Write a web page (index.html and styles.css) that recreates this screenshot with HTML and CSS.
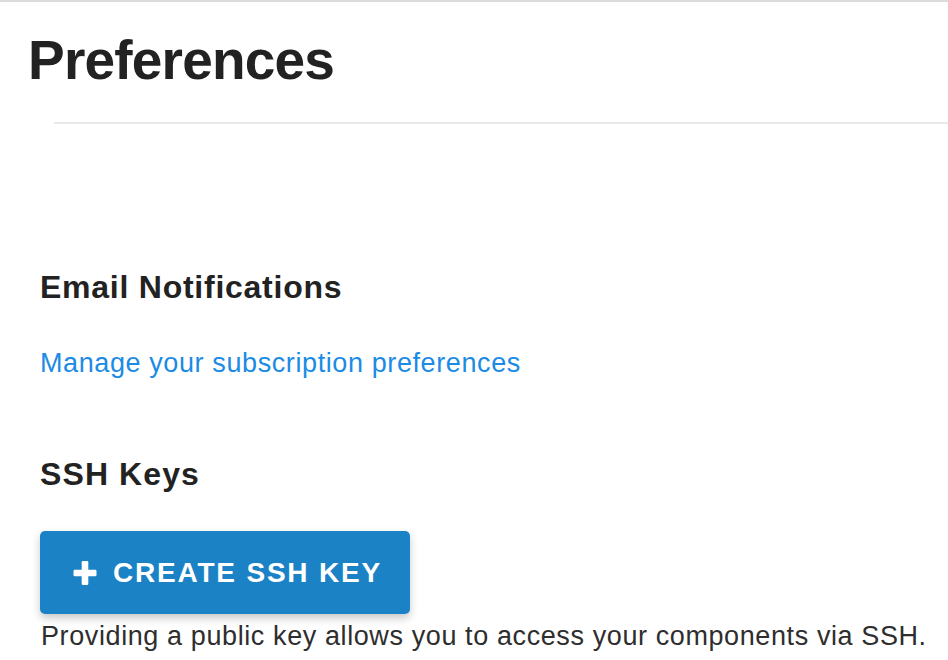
FILE: index.html
```html
<!DOCTYPE html>
<html>
<head>
<meta charset="utf-8">
<link rel="stylesheet" href="styles.css">
</head>
<body>
<div class="page">
  <header class="page-header">
    <h1 class="title">Preferences</h1>
  </header>
  <hr class="divider">
  <main class="content">
    <section class="section email">
      <h2 class="section-title">Email Notifications</h2>
      <a class="link" href="#">Manage your subscription preferences</a>
    </section>
    <section class="section ssh">
      <h2 class="section-title">SSH Keys</h2>
      <button class="btn-primary" type="button">
        <svg class="plus" viewBox="0 0 24 24" width="24" height="24" aria-hidden="true"><rect x="0.5" y="8.7" width="23" height="6.6" rx="1.2" fill="#fff"/><rect x="8.7" y="0" width="6.6" height="24" rx="1.2" fill="#fff"/></svg>
        <span>CREATE SSH KEY</span>
      </button>
      <p class="hint">Providing a public key allows you to access your components via SSH.</p>
    </section>
  </main>
</div>
</body>
</html>
```
FILE: styles.css
```css
html, body {
  margin: 0;
  padding: 0;
  background: #fff;
}
body {
  font-family: "Liberation Sans", Arial, Helvetica, sans-serif;
  color: #222;
  overflow: hidden;
}
.page {
  border-top: 2px solid #dcdcdc;
  width: 948px;
  height: 658px;
}
.page-header {
  padding: 25px 0 0 28px;
}
.title {
  margin: 0;
  font-size: 55px;
  line-height: 66px;
  font-weight: 700;
  letter-spacing: -0.8px;
  color: #222;
}
.divider {
  margin: 29px 0 0 54px;
  border: 0;
  height: 2px;
  background: #e9e9e9;
}
.content {
  padding: 0 0 0 40px;
}
.section-title {
  margin: 0;
  font-size: 32px;
  line-height: 40px;
  font-weight: 700;
  letter-spacing: 0.75px;
  color: #222;
}
.ssh .section-title {
  letter-spacing: 1.1px;
}
.email {
  padding-top: 143px;
}
.link {
  display: block;
  width: fit-content;
  margin-top: 40px;
  font-size: 27px;
  line-height: 32px;
  letter-spacing: 0.6px;
  color: #1b8be4;
  text-decoration: none;
}
.ssh {
  padding-top: 75px;
}
.btn-primary {
  display: flex;
  align-items: center;
  gap: 16px;
  margin: 37px 0 0 0;
  width: 370px;
  height: 83px;
  padding: 0 0 0 33px;
  border: 0;
  border-radius: 5px;
  background: #1b82c5;
  box-shadow: 0 4px 8px rgba(0, 0, 0, 0.22);
  color: #fff;
  font-family: "Liberation Sans", Arial, Helvetica, sans-serif;
  font-size: 28px;
  font-weight: 700;
  letter-spacing: 1.8px;
  cursor: pointer;
}
.plus {
  flex: none;
  width: 24px;
  height: 24px;
}
.hint {
  margin: 5px 0 0 1px;
  font-size: 27px;
  line-height: 34px;
  letter-spacing: 0.6px;
  color: #2e2e2e;
}
```
